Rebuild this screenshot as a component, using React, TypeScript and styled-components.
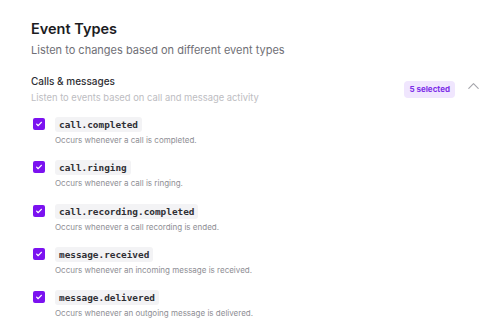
import React from 'react';
import styled, { createGlobalStyle } from 'styled-components';

const GlobalStyle = createGlobalStyle`
    html, body {
        margin: 0;
        padding: 0;
        background: #fff;
        font-family: Inter, 'Noto Sans', sans-serif;
    }
`;

const Page = styled.div`
    width: 500px;
    height: 336px;
    overflow: hidden;
    box-sizing: border-box;
    padding: 20px 21px 0 31px;
`;

const Title = styled.h1`
    margin: 0;
    font-size: 14.5px;
    font-weight: 600;
    color: #1c1c1f;
    line-height: 18px;
`;

const Subtitle = styled.p`
    margin: 5px 0 0;
    font-size: 11px;
    color: #6f6f76;
    line-height: 14px;
`;

const Section = styled.section`
    margin-top: 18px;
`;

const SectionHead = styled.div`
    display: flex;
    align-items: flex-start;
    justify-content: space-between;
`;

const SectionText = styled.div`
    display: flex;
    flex-direction: column;
    gap: 4px;
`;

const SectionName = styled.div`
    font-size: 10px;
    font-weight: 500;
    color: #2e2e33;
    line-height: 13px;
`;

const SectionHint = styled.div`
    font-size: 9.4px;
    color: #bdbdc2;
    line-height: 12px;
`;

const HeadActions = styled.div`
    display: flex;
    align-items: flex-start;
    gap: 13px;
    margin-top: 6px;
`;

const Badge = styled.span`
    background: #f0e6fe;
    color: #7d2ee8;
    font-size: 8px;
    font-weight: 700;
    padding: 4px 5px;
    border-radius: 4px;
    line-height: 9px;
`;

const Chevron = styled.svg`
    width: 11px;
    height: 6px;
    color: #a4a4aa;
    margin-top: 2px;
`;

const EventList = styled.ul`
    list-style: none;
    margin: 13px 0 0;
    padding: 0;
    display: flex;
    flex-direction: column;
    gap: 14.3px;
`;

const EventRow = styled.li`
    display: flex;
    align-items: flex-start;
    gap: 10px;
    padding-left: 2px;
`;

const Check = styled.span<{ $checked: boolean }>`
    width: 12px;
    height: 12px;
    margin-top: 1px;
    border-radius: 2px;
    flex-shrink: 0;
    display: flex;
    align-items: center;
    justify-content: center;
    background: ${(p) => (p.$checked ? '#7b12f0' : '#fff')};
    border: ${(p) => (p.$checked ? 'none' : '1px solid #ccc')};
`;

const EventBody = styled.div`
    display: flex;
    flex-direction: column;
    align-items: flex-start;
    gap: 3px;
`;

const Code = styled.code`
    display: inline-block;
    font-family: 'DejaVu Sans Mono', 'Liberation Mono', monospace;
    font-size: 9.4px;
    font-weight: 600;
    color: #2f2f34;
    background: #f3f3f5;
    border-radius: 3px;
    padding: 2px 4px;
    line-height: 11px;
`;

const EventDesc = styled.div`
    font-size: 8px;
    color: #8e8e94;
    line-height: 11px;
`;

const events = [
    { name: 'call.completed', desc: 'Occurs whenever a call is completed.' },
    { name: 'call.ringing', desc: 'Occurs whenever a call is ringing.' },
    { name: 'call.recording.completed', desc: 'Occurs whenever a call recording is ended.' },
    { name: 'message.received', desc: 'Occurs whenever an incoming message is received.' },
    { name: 'message.delivered', desc: 'Occurs whenever an outgoing message is delivered.' },
];

export default function App() {
    return (
        <Page>
            <GlobalStyle />
            <Title>Event Types</Title>
            <Subtitle>Listen to changes based on different event types</Subtitle>
            <Section>
                <SectionHead>
                    <SectionText>
                        <SectionName>Calls &amp; messages</SectionName>
                        <SectionHint>Listen to events based on call and message activity</SectionHint>
                    </SectionText>
                    <HeadActions>
                        <Badge>5 selected</Badge>
                        <Chevron viewBox="0 0 11 6" fill="none" stroke="currentColor" strokeWidth="1.1" strokeLinecap="round" strokeLinejoin="round">
                            <path d="M0.8 5.4l4.7-4.7 4.7 4.7" />
                        </Chevron>
                    </HeadActions>
                </SectionHead>
                <EventList>
                    {events.map((ev) => (
                        <EventRow key={ev.name}>
                            <Check $checked>
                                <svg width="8" height="8" viewBox="0 0 12 12" fill="none" stroke="#fff" strokeWidth="2" strokeLinecap="round" strokeLinejoin="round">
                                    <path d="M2.5 6.2l2.3 2.3 4.7-5" />
                                </svg>
                            </Check>
                            <EventBody>
                                <Code>{ev.name}</Code>
                                <EventDesc>{ev.desc}</EventDesc>
                            </EventBody>
                        </EventRow>
                    ))}
                </EventList>
            </Section>
            <Section>
                <SectionHead>
                    <SectionText>
                        <SectionName>Conversations &amp; contacts</SectionName>
                    </SectionText>
                </SectionHead>
            </Section>
        </Page>
    );
}
